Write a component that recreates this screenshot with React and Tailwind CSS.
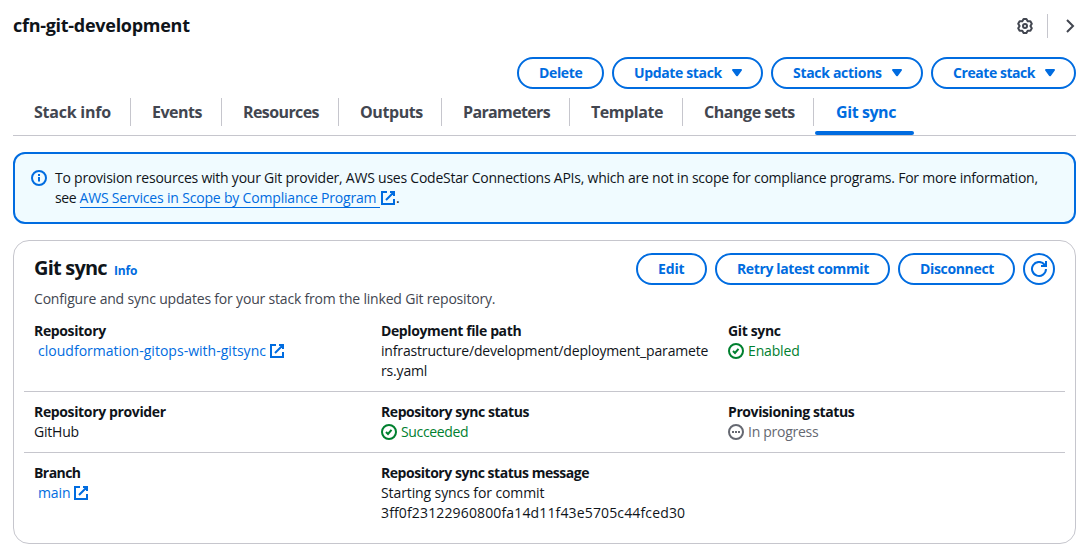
import React from "react";

const Icon = ({ children, className = "" }) => (
  <svg viewBox="0 0 16 16" width="16" height="16" fill="none" stroke="currentColor" strokeWidth="2" className={"shrink-0 " + className}>
    {children}
  </svg>
);

const External = ({ className }) => (
  <Icon className={className}>
    <path d="M10 2h4v4M6 10l8-8M14 9.05V14H2V2h5" />
  </Icon>
);

const Check = () => (
  <Icon className="mt-0.5">
    <circle cx="8" cy="8" r="7" />
    <path d="m5 8 2 2 3.5-4.2" />
  </Icon>
);

const Progress = () => (
  <Icon className="mt-0.5">
    <circle cx="8" cy="8" r="7" />
    <path d="M4 8h2M7 8h2M10 8h2" />
  </Icon>
);

const Caret = () => (
  <Icon>
    <path d="M4 5h8l-4 5.300z" fill="currentColor" strokeLinejoin="round" />
  </Icon>
);

function Button({ children, caret, className = "" }) {
  return (
    <button className={"flex h-8 shrink-0 items-center justify-between rounded-full border-2 border-[#006ce0] pr-4 pl-5 text-[14px] leading-5 font-bold whitespace-nowrap text-[#006ce0] " + className}>
      <span>{children}</span>
      {caret && <Caret />}
    </button>
  );
}

const tabs = [
  ["Stack info", "w-[118px] tracking-[-0.24px]"],
  ["Events", "w-[91px] tracking-[-0.5px]"],
  ["Resources", "w-[117px] tracking-[-0.6px]"],
  ["Outputs", "w-[103px] tracking-[-0.42px]"],
  ["Parameters", "w-[128px] tracking-[-0.64px]"],
  ["Template", "w-[113px] tracking-[-0.44px]"],
  ["Change sets", "w-[131px] tracking-[-0.46px]"],
];

function Field({ label, track, children }) {
  return (
    <div className="w-[347px] shrink-0">
      <div className={"font-bold " + track}>{label}</div>
      {children}
    </div>
  );
}

export default function App() {
  return (
    <div className="h-[549px] w-[1090px] overflow-hidden bg-white pl-[13px] font-['Open_Sans','Noto_Sans',sans-serif] text-[14px] leading-5 text-[#0f141a]">
      <div className="w-[1063px]">
        <header className="flex h-[57px] items-start justify-between">
          <h1 className="mt-[14px] text-[18px] leading-[22px] font-bold tracking-[-0.28px]">cfn-git-development</h1>
          <div className="mt-[14px] -mr-[3px] flex h-6 items-center text-[#424650]">
            <Icon className="mr-[14px]">
              <path
                d="M6.600 1h2.800l1.300 2.300h2.700l1.400 2.350L13.400 8l1.400 2.350-1.400 2.350h-2.700L9.400 15H6.600l-1.300-2.300H2.600l-1.400-2.350L2.600 8 1.200 5.650 2.600 3.300h2.700z"
                strokeLinejoin="round"
              />
              <circle cx="8" cy="8" r="2" />
            </Icon>
            <span className="h-6 w-px bg-[#c6c6cd]" />
            <Icon className="ml-[15px]">
              <path d="m4 2 6 6-6 6" />
            </Icon>
          </div>
        </header>

        <div className="flex h-8 justify-end gap-2">
          <Button className="w-[87px] tracking-[-0.35px]">Delete</Button>
          <Button className="w-[151px] tracking-[-0.36px]" caret>Update stack</Button>
          <Button className="w-[152px] tracking-[-0.3px]" caret>Stack actions</Button>
          <Button className="w-[145px] tracking-[-0.44px]" caret>Create stack</Button>
        </div>

        <nav className="flex h-[47px] border-b border-[#c6c6cd] text-[16px] leading-5 font-bold text-[#424650]">
          {tabs.map(([t, c]) => (
            <div key={t} className={"mt-[9px] flex h-7 shrink-0 items-center border-r border-[#c6c6cd] pl-[21px] whitespace-nowrap " + c}>
              {t}
            </div>
          ))}
          <div className="ml-px flex h-[46px] w-[99px] flex-col justify-between text-[#006ce0]">
            <span className="mt-[13px] pl-[21px] tracking-[-0.42px]">Git sync</span>
            <span className="h-1 rounded-sm bg-[#006ce0]" />
          </div>
        </nav>

        <section className="mt-4 flex h-[72px] gap-2 rounded-xl border-2 border-[#006ce0] bg-[#f0fbff] pt-[14px] pl-4">
          <Icon className="mt-0.5 text-[#006ce0]">
            <circle cx="8" cy="8" r="7" />
            <path d="M8 11.500V7M8 6V4" />
          </Icon>
          <div className="whitespace-nowrap">
            <p className="tracking-[-0.23px]">
              To provision resources with your Git provider, AWS uses CodeStar Connections APIs, which are not in scope for compliance programs. For more information,
            </p>
            <p className="flex">
              <span className="w-[24.5px] tracking-[-0.4px]">see</span>
              <a className="flex h-5 w-[300.5px] border-b border-[#006ce0] tracking-[-0.18px] text-[#006ce0]">AWS Services in Scope by Compliance Program</a>
              <External className="mt-0.5 text-[#006ce0]" />
              <span>.</span>
            </p>
          </div>
        </section>

        <section className="mt-4 h-[304px] rounded-2xl border border-[#c6c6cd] px-[10px]">
          <div className="flex pt-3 pr-[10px] pl-[10px]">
            <div className="flex flex-1 flex-col">
              <div className="flex h-8 items-center gap-2">
                <h2 className="-mt-0.5 w-[72px] text-[20px] leading-6 font-bold tracking-[-0.8px] whitespace-nowrap">Git sync</h2>
                <a className="mt-1 text-[12px] leading-4 font-bold tracking-[-0.15px] text-[#006ce0]">Info</a>
              </div>
              <p className="mt-1 tracking-[-0.185px] whitespace-nowrap text-[#424650]">Configure and sync updates for your stack from the linked Git repository.</p>
            </div>
            <div className="flex gap-2">
              <Button className="w-[71px] tracking-[-0.15px]">Edit</Button>
              <Button className="w-[175px] tracking-[-0.37px]">Retry latest commit</Button>
              <Button className="w-[117px] tracking-[-0.34px]">Disconnect</Button>
              <button className="flex size-8 items-center justify-center rounded-full border-2 border-[#006ce0] text-[#006ce0]">
                <Icon>
                  <path d="M15 0v5h-5M15 8a7 7 0 1 1-1.500-4.400L15 5" />
                </Icon>
              </button>
            </div>
          </div>

          <div className="mt-3 flex h-[71px] border-b border-[#c6c6cd] pl-[10px]">
            <Field label="Repository" track="tracking-[-0.36px]">
              <a className="flex gap-[3px] pl-1 tracking-[0.02px] text-[#006ce0]">cloudformation-gitops-with-gitsync<External className="mt-0.5" /></a>
            </Field>
            <Field label="Deployment file path" track="tracking-[-0.38px]">
              <div className="w-[329px] tracking-[-0.16px] break-all">infrastructure/development/deployment_parameters.yaml</div>
            </Field>
            <Field label="Git sync" track="tracking-[-0.36px]">
              <div className="flex gap-1 tracking-[-0.15px] text-[#00802f]"><Check />Enabled</div>
            </Field>
          </div>
          <div className="flex h-[61px] border-b border-[#c6c6cd] pt-[10px] pl-[10px]">
            <Field label="Repository provider" track="tracking-[-0.36px]">
              <div className="tracking-[-0.2px]">GitHub</div>
            </Field>
            <Field label="Repository sync status" track="tracking-[-0.44px]">
              <div className="flex gap-1 tracking-[-0.35px] text-[#00802f]"><Check />Succeeded</div>
            </Field>
            <Field label="Provisioning status" track="tracking-[-0.4px]">
              <div className="flex gap-1 tracking-[-0.28px] text-[#656871]"><Progress />In progress</div>
            </Field>
          </div>
          <div className="flex pt-[10px] pl-[10px]">
            <Field label="Branch" track="tracking-[-0.55px]">
              <a className="flex gap-[3px] pl-1 tracking-[-0.1px] text-[#006ce0]">main<External className="mt-0.5" /></a>
            </Field>
            <Field label="Repository sync status message" track="tracking-[-0.46px]">
              <div className="tracking-[-0.1px]">Starting syncs for commit</div>
              <div className="tracking-[0.145px]">3ff0f23122960800fa14d11f43e5705c44fced30</div>
            </Field>
          </div>
        </section>
      </div>
    </div>
  );
}
